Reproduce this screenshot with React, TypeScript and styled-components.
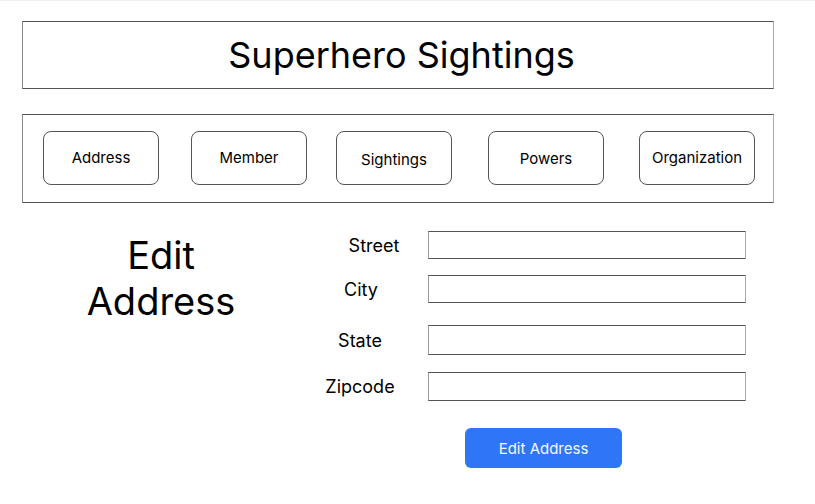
import React from "react";
import styled, { createGlobalStyle } from "styled-components";

const GlobalStyle = createGlobalStyle`
  html, body {
    margin: 0;
    padding: 0;
    background: #ffffff;
  }
  body {
    font-family: Inter, "Noto Sans", sans-serif;
    color: #000;
  }
`;

const Page = styled.div`
  width: 815px;
  min-height: 504px;
  box-sizing: border-box;
  border-top: 1px solid #f1f1f1;
  padding: 20px 41px 0 22px;
`;

const Framed = styled.div`
  box-sizing: border-box;
  width: 752px;
  border-top: 1px solid #555;
  border-bottom: 1px solid #555;
  border-left: 1px solid #8a8a8a;
  border-right: 1px solid #a8a8a8;
`;

const Header = styled(Framed)`
  height: 68px;
  display: flex;
  align-items: center;
  justify-content: center;
  padding-left: 7px;
`;

const Title = styled.h1`
  margin: 0;
  font-size: 36px;
  font-weight: 400;
  letter-spacing: 0;
`;

const Nav = styled(Framed)`
  margin-top: 25px;
  height: 89px;
  display: flex;
  align-items: center;
  padding: 0 0 1px 20px;
`;

const NavButton = styled.div<{ $ml: number; $dy?: number }>`
  box-sizing: border-box;
  width: 116px;
  height: 54px;
  margin-left: ${(p) => p.$ml}px;
  border: 1px solid #555;
  border-radius: 8px;
  display: flex;
  align-items: center;
  justify-content: center;
  font-size: 15px;
  padding-top: ${(p) => (p.$dy ?? 0) * 2}px;
  padding-bottom: 2px;
`;

const Main = styled.div`
  display: flex;
`;

const HeadingCol = styled.div`
  width: 278px;
  text-align: center;
  padding-top: 29px;
`;

const Heading = styled.h2`
  margin: 0;
  font-size: 38px;
  font-weight: 400;
  line-height: 46px;
`;

const Form = styled.div`
  padding-top: 28px;
  display: flex;
  flex-direction: column;
`;

const Row = styled.div<{ $mt: number; $h: number }>`
  display: flex;
  align-items: center;
  margin-top: ${(p) => p.$mt}px;
  height: ${(p) => p.$h}px;
`;

const Label = styled.div<{ $shift?: number }>`
  width: 120px;
  margin-right: 8px;
  box-sizing: border-box;
  text-align: center;
  font-size: 18px;
  padding-left: ${(p) => (p.$shift ?? 0) * 2}px;
`;

const Input = styled.div`
  box-sizing: border-box;
  width: 318px;
  height: 100%;
  border-top: 1px solid #555;
  border-bottom: 1px solid #555;
  border-left: 1px solid #9a9a9a;
  border-right: 1px solid #aaa;
`;

const SubmitRow = styled.div`
  margin-top: 27px;
  padding-left: 165px;
`;

const Submit = styled.button`
  width: 157px;
  height: 40px;
  border: none;
  border-radius: 6px;
  background: #2f76f6;
  color: #f4f8ff;
  font-family: Inter, "Noto Sans", sans-serif;
  font-size: 15px;
  padding: 0;
`;

const navItems: { label: string; ml: number; dy?: number }[] = [
  { label: "Address", ml: 0 },
  { label: "Member", ml: 32 },
  { label: "Sightings", ml: 29, dy: 2 },
  { label: "Powers", ml: 36, dy: 1 },
  { label: "Organization", ml: 35 },
];

const fields = [
  { label: "Street", mt: 0, h: 28, shift: 14 },
  { label: "City", mt: 16, h: 28, shift: 1 },
  { label: "State", mt: 22, h: 30, shift: 0 },
  { label: "Zipcode", mt: 17, h: 29, shift: 0 },
];

export default function App() {
  return (
    <>
      <GlobalStyle />
      <Page>
        <Header>
          <Title>Superhero Sightings</Title>
        </Header>
        <Nav>
          {navItems.map((n) => (
            <NavButton key={n.label} $ml={n.ml} $dy={n.dy}>
              {n.label}
            </NavButton>
          ))}
        </Nav>
        <Main>
          <HeadingCol>
            <Heading>
              Edit
              <br />
              Address
            </Heading>
          </HeadingCol>
          <Form>
            {fields.map((f) => (
              <Row key={f.label} $mt={f.mt} $h={f.h}>
                <Label $shift={f.shift}>{f.label}</Label>
                <Input />
              </Row>
            ))}
            <SubmitRow>
              <Submit>Edit Address</Submit>
            </SubmitRow>
          </Form>
        </Main>
      </Page>
    </>
  );
}
